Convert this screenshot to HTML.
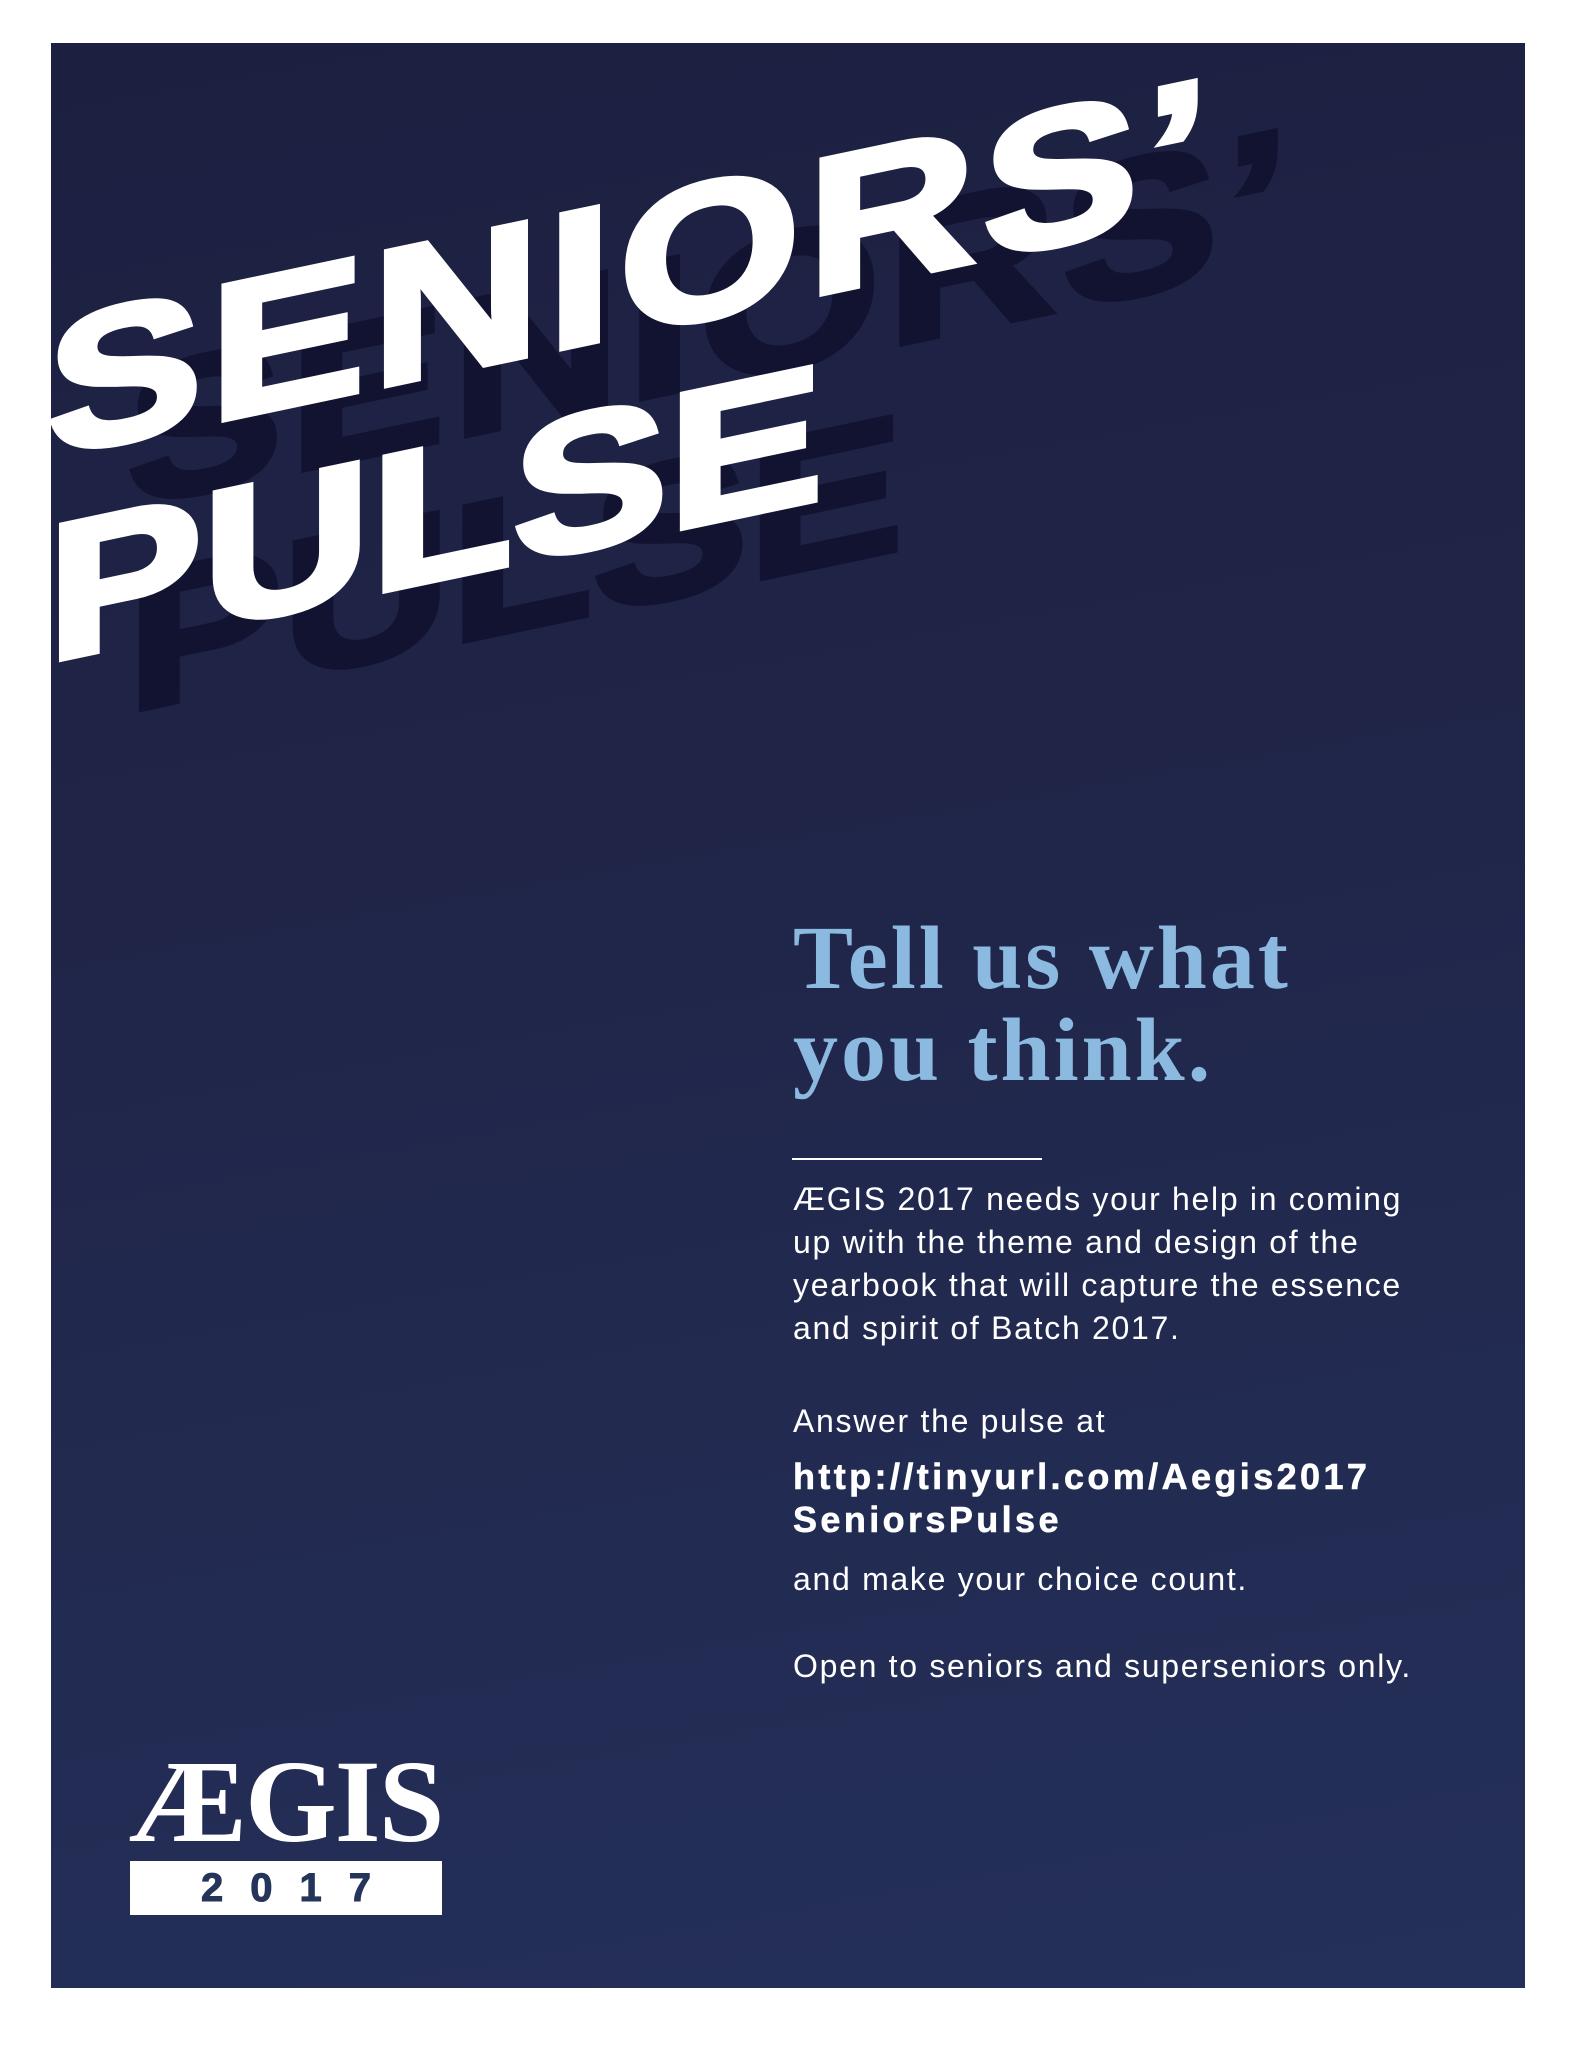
<!DOCTYPE html>
<html><head><meta charset="utf-8"><style>
html,body{margin:0;padding:0;background:#fff;}
body{width:1582px;height:2048px;position:relative;overflow:hidden;}
.panel{position:absolute;left:51px;top:43px;width:1474px;height:1945px;overflow:hidden;
background:linear-gradient(170deg,#1c1f40 0%,#202548 40%,#24305a 100%);}
.sk{position:absolute;left:0;top:0;width:1500px;height:1000px;transform:skewY(-11.9deg);transform-origin:0 0;}
.t{position:absolute;left:-4px;font-family:"Liberation Sans",sans-serif;font-weight:bold;font-size:194px;line-height:1;white-space:nowrap;transform:scaleX(1.2);transform-origin:0 0;letter-spacing:6px;}
.p{letter-spacing:0px;}
.sh{color:#121331;-webkit-text-stroke:6px #121331;}
.w{color:#fff;-webkit-text-stroke:6px #fff;}
.head{position:absolute;left:742px;top:0;font-family:"Liberation Serif",serif;font-weight:bold;font-size:90px;color:#8bb9df;letter-spacing:3px;line-height:92px;}
.rule{position:absolute;left:741px;top:1115px;width:250px;height:2px;background:#fff;}
.body{position:absolute;left:742px;font-family:"Liberation Sans",sans-serif;font-size:32px;color:#fff;line-height:43px;letter-spacing:1.7px;white-space:nowrap;}
.url{font-weight:bold;font-size:36px;letter-spacing:3.4px;-webkit-text-stroke:0.6px #fff;}
.logo{position:absolute;left:78px;top:1700px;font-family:"Liberation Serif",serif;font-weight:bold;font-size:118px;color:#fff;letter-spacing:-2px;line-height:1;}
.box{position:absolute;left:79px;top:1818px;width:312px;height:54px;background:#fff;color:#25345a;font-family:"Liberation Sans",sans-serif;font-weight:bold;font-size:40px;letter-spacing:27px;text-align:center;line-height:54px;text-indent:27px;-webkit-text-stroke:1px #25345a;}
</style></head><body>
<div class="panel">
  <div class="sk" style="left:80px;top:50px;">
    <div class="t sh" style="top:250px;">SENIORS’</div>
    <div class="t sh p" style="top:455px;">PULSE</div>
  </div>
  <div class="sk">
    <div class="t w" style="top:250px;">SENIORS’</div>
    <div class="t w p" style="top:455px;">PULSE</div>
  </div>
  <div class="head" style="top:870px;">Tell us what<br>you think.</div>
  <div class="rule"></div>
  <div class="body" style="top:1135px;">ÆGIS 2017 needs your help in coming<br>up with the theme and design of the<br>yearbook that will capture the essence<br>and spirit of Batch 2017.</div>
  <div class="body" style="top:1357px;">Answer the pulse at</div>
  <div class="body url" style="top:1412px;">http://tinyurl.com/Aegis2017<br>SeniorsPulse</div>
  <div class="body" style="top:1515px;">and make your choice count.</div>
  <div class="body" style="top:1602px;">Open to seniors and superseniors only.</div>
  <div class="logo">ÆGIS</div>
  <div class="box">2017</div>
</div>
</body></html>
